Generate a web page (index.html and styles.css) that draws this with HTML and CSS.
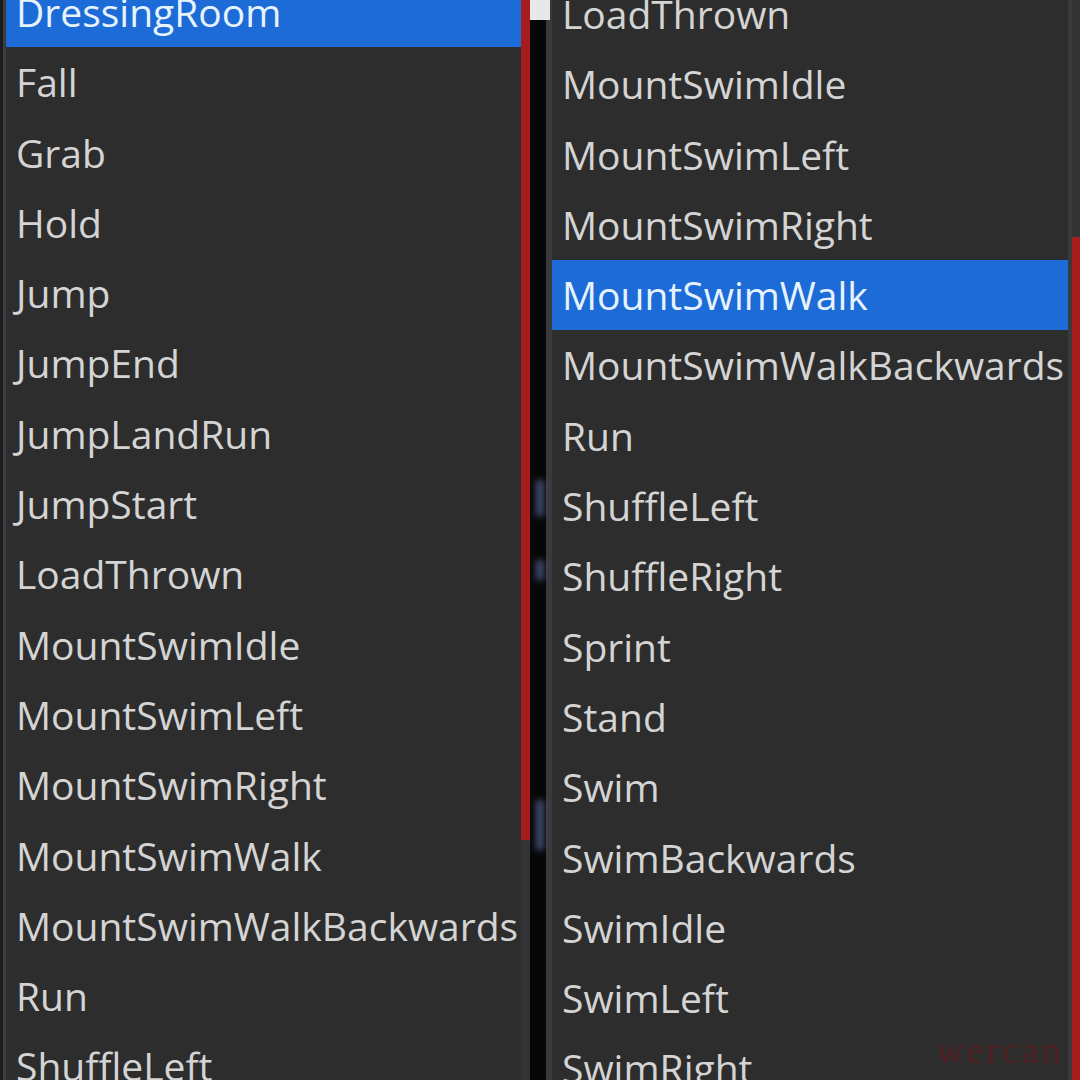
FILE: index.html
```html
<!DOCTYPE html>
<html>
<head>
<meta charset="utf-8">
<link rel="stylesheet" href="styles.css">
</head>
<body>
<div class="stage">
  <div class="edge"></div>
  <div class="panel panel-left">
    <div class="list list-left">
      <div class="row selected">DressingRoom</div>
      <div class="row">Fall</div>
      <div class="row">Grab</div>
      <div class="row">Hold</div>
      <div class="row">Jump</div>
      <div class="row">JumpEnd</div>
      <div class="row">JumpLandRun</div>
      <div class="row">JumpStart</div>
      <div class="row">LoadThrown</div>
      <div class="row">MountSwimIdle</div>
      <div class="row">MountSwimLeft</div>
      <div class="row">MountSwimRight</div>
      <div class="row">MountSwimWalk</div>
      <div class="row">MountSwimWalkBackwards</div>
      <div class="row">Run</div>
      <div class="row">ShuffleLeft</div>
    </div>
    <div class="scroll scroll-left"><div class="thumb thumb-left"></div></div>
  </div>
  <div class="gap">
    <div class="gap-white"></div>
    <div class="gap-blob blob1"></div>
    <div class="gap-blob blob2"></div>
    <div class="gap-blob blob3"></div>
  </div>
  <div class="divider"></div>
  <div class="panel panel-right">
    <div class="list list-right">
      <div class="row">LoadThrown</div>
      <div class="row">MountSwimIdle</div>
      <div class="row">MountSwimLeft</div>
      <div class="row">MountSwimRight</div>
      <div class="row selected">MountSwimWalk</div>
      <div class="row">MountSwimWalkBackwards</div>
      <div class="row">Run</div>
      <div class="row">ShuffleLeft</div>
      <div class="row">ShuffleRight</div>
      <div class="row">Sprint</div>
      <div class="row">Stand</div>
      <div class="row">Swim</div>
      <div class="row">SwimBackwards</div>
      <div class="row">SwimIdle</div>
      <div class="row">SwimLeft</div>
      <div class="row">SwimRight</div>
    </div>
    <div class="rline"></div>
    <div class="scroll scroll-right"><div class="thumb thumb-right"></div></div>
  </div>
  <div class="watermark">wercan</div>
</div>
</body>
</html>
```

FILE: styles.css
```css
html, body {
  margin: 0;
  padding: 0;
  background: #111;
}
.stage {
  position: relative;
  display: flex;
  width: 1080px;
  height: 1080px;
  overflow: hidden;
  font-family: "Open Sans", "Noto Sans", sans-serif;
}
.edge {
  width: 3px;
  background: #1c1c1e;
  flex: none;
}
.panel {
  display: flex;
  background: #2d2d2d;
  overflow: hidden;
}
.panel-left {
  width: 524px;
  flex: none;
  border-left: 3px solid #3d3d40;
}
.list {
  flex: 1;
  display: flex;
  flex-direction: column;
  min-width: 0;
}
.list-left {
  margin-top: -23px;
}
.list-right {
  margin-top: -21px;
}
.row {
  height: 70.3px;
  line-height: 70px;
  flex: none;
  font-size: 39px;
  color: #d4d4d4;
  padding-left: 10px;
  white-space: nowrap;
}
.list-right .row {
  padding-left: 10px;
}
.row.selected {
  background: #1c6bd6;
  color: #e6f3ff;
}
.scroll {
  flex: none;
  background: #333335;
  position: relative;
}
.scroll-left {
  width: 9px;
}
.thumb {
  position: absolute;
  left: 0;
  right: 0;
  background: #a51d1f;
}
.thumb-left {
  top: 0;
  height: 840px;
}
.gap {
  width: 16px;
  flex: none;
  background: #070708;
  position: relative;
}
.gap-white {
  position: absolute;
  left: 0;
  top: 0;
  width: 20px;
  height: 20px;
  background: #e8e8e8;
}
.gap-blob {
  position: absolute;
  left: 6px;
  width: 8px;
  background: #5a6a9a;
  filter: blur(3px);
  opacity: 0.7;
}
.blob1 { top: 480px; height: 36px; }
.blob2 { top: 560px; height: 20px; }
.blob3 { top: 800px; height: 50px; }
.divider {
  width: 6px;
  flex: none;
  background: #3a3a3c;
}
.panel-right {
  flex: 1;
}
.rline {
  width: 4px;
  flex: none;
  background: #3a3a3c;
}
.scroll-right {
  width: 8px;
}
.thumb-right {
  top: 237px;
  bottom: 0;
}
.watermark {
  position: absolute;
  right: 16px;
  bottom: 8px;
  font-family: "Liberation Serif", serif;
  font-size: 38px;
  letter-spacing: 3px;
  color: #5a1a1e;
  opacity: 0.8;
}
```
